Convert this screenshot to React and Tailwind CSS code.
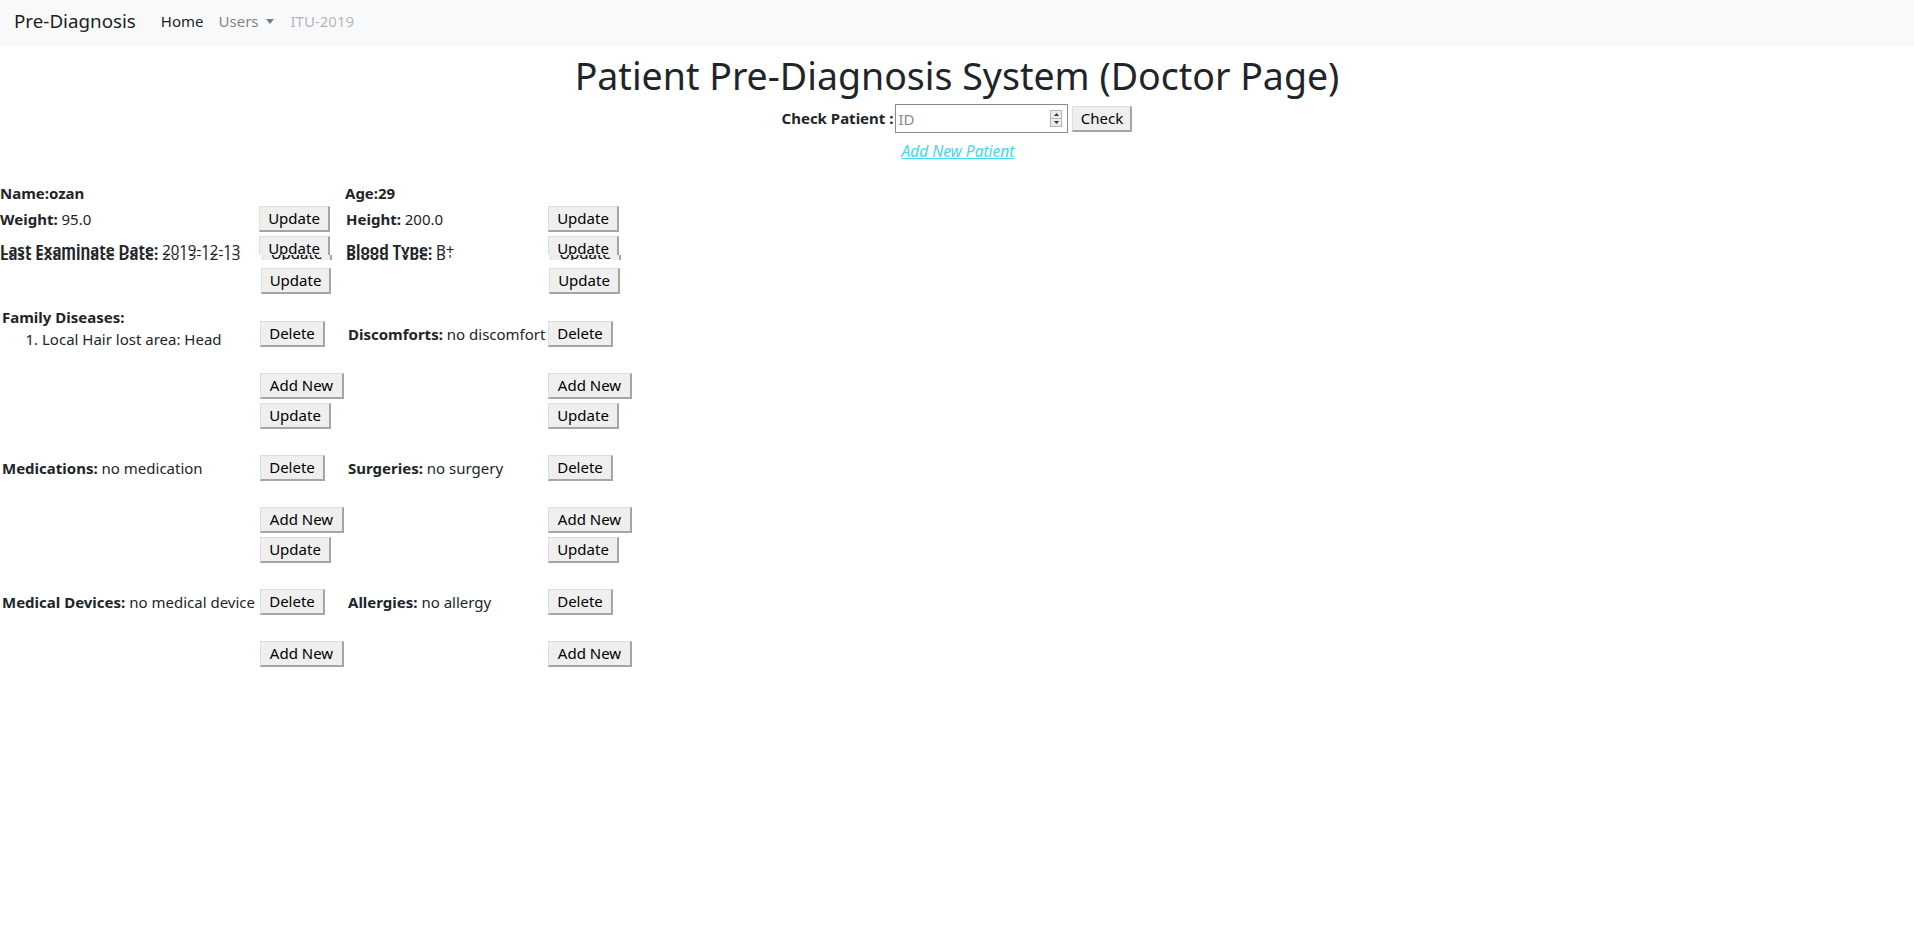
import React from "react";

const BTN =
  "bg-[#efefef] border-t border-l border-r-2 border-b-2 border-t-[#dedede] border-l-[#dedede] border-r-[#a5a5a5] border-b-[#a5a5a5] h-[26px] text-[15px] text-black flex items-center justify-center leading-none shrink-0 font-['Noto_Sans',sans-serif]";

function Btn({ w, children, inner = "" }) {
  return (
    <button className={`${BTN} ${w}`}>
      <span className={inner}>{children}</span>
    </button>
  );
}

function Lbl({ b, v }) {
  return (
    <span className="whitespace-nowrap text-[15px] text-[#212529]">
      <b className="font-bold">{b}</b>
      {v ? " " + v : ""}
    </span>
  );
}

const GRID = "grid grid-cols-[259px_88px_201px_120px] items-center";
const GRID2 = "grid grid-cols-[260px_88px_200px_120px] items-center";

function Block({ left, right, update = true, first = false }) {
  return (
    <div className={`${first ? "mt-[27px]" : "mt-[26px]"} flex flex-col`}>
      <div className={`${GRID2} h-[26px]`}>
        <div className="pl-[2px] flex items-center h-[26px] overflow-visible">{left}</div>
        <div>
          <Btn w="w-[65px]">Delete</Btn>
        </div>
        <div>{right}</div>
        <div>
          <Btn w="w-[65px]">Delete</Btn>
        </div>
      </div>
      <div className={`${GRID2} h-[26px] mt-[26px]`}>
        <div></div>
        <div>
          <Btn w="w-[84px]">Add New</Btn>
        </div>
        <div></div>
        <div>
          <Btn w="w-[84px]">Add New</Btn>
        </div>
      </div>
      {update && (
        <div className={`${GRID2} h-[26px] mt-[4px]`}>
          <div></div>
          <div>
            <Btn w="w-[71px]">Update</Btn>
          </div>
          <div></div>
          <div>
            <Btn w="w-[71px]">Update</Btn>
          </div>
        </div>
      )}
    </div>
  );
}

export default function App() {
  return (
    <div className="min-h-[935px] bg-white font-['Noto_Sans',sans-serif] text-[#212529]">
      {/* Navbar */}
      <nav className="h-[47px] bg-[#f8f9fa] flex items-center pl-[14px] pb-[4px]">
        <span className="text-[18.8px] text-[rgba(0,0,0,0.9)] mr-[25px]">Pre-Diagnosis</span>
        <span className="text-[15px] text-[rgba(0,0,0,0.9)] mr-[15px]">Home</span>
        <span className="text-[15px] text-[rgba(0,0,0,0.5)] flex items-center mr-[17px]">
          Users
          <svg width="8" height="5" viewBox="0 0 8 5" className="ml-[7px]">
            <path d="M0 0 L8 0 L4 5 Z" fill="rgba(0,0,0,0.5)" />
          </svg>
        </span>
        <span className="text-[15px] text-[rgba(0,0,0,0.3)]">ITU-2019</span>
      </nav>

      {/* Heading */}
      <h1 className="text-center text-[37.5px] leading-[48px] mt-[5px] font-normal text-[#212529]">
        Patient Pre-Diagnosis System (Doctor Page)
      </h1>

      {/* Check row */}
      <div className="flex justify-center items-center h-[29px] mt-[4px]">
        <span className="text-[15px] font-bold mr-[2px] whitespace-nowrap">Check Patient :</span>
        <div className="w-[173px] h-[29px] border border-[#8a8a8a] flex items-center bg-white">
          <input
            placeholder="ID"
            className="flex-1 min-w-0 h-full pl-[2px] text-[15px] outline-none placeholder:text-[#8a8a8a] bg-transparent"
          />
          <div className="w-[12px] h-[17px] mr-[5px] border border-[#b5b5b5] bg-[#ececec] flex flex-col">
            <div className="flex-1 flex items-center justify-center border-b border-[#b5b5b5]">
              <svg width="5" height="3" viewBox="0 0 5 3">
                <path d="M0 3 L2.5 0 L5 3 Z" fill="#333" />
              </svg>
            </div>
            <div className="flex-1 flex items-center justify-center">
              <svg width="5" height="3" viewBox="0 0 5 3">
                <path d="M0 0 L5 0 L2.5 3 Z" fill="#333" />
              </svg>
            </div>
          </div>
        </div>
        <div className="ml-[4px]">
          <Btn w="w-[60px]">Check</Btn>
        </div>
      </div>

      {/* Link */}
      <div className="flex justify-center mt-[7px] h-[24px] items-center">
        <a className="italic underline text-[15.5px] text-[#45d4f2] pl-[2px]">Add New Patient</a>
      </div>

      {/* Patient data */}
      <div className="flex flex-col">
        <div className={`${GRID} h-[24px] mt-[17px]`}>
          <Lbl b="Name:ozan" />
          <div></div>
          <div className="-ml-[2px]">
            <Lbl b="Age:29" />
          </div>
          <div></div>
        </div>
        <div className={`${GRID} h-[26px] mt-[1px]`}>
          <Lbl b="Weight:" v="95.0" />
          <div>
            <Btn w="w-[71px]">Update</Btn>
          </div>
          <div className="-ml-[1px]">
            <Lbl b="Height:" v="200.0" />
          </div>
          <div>
            <Btn w="w-[71px]">Update</Btn>
          </div>
        </div>
        {/* Last examinate row (rendering glitch reproduced) */}
        <div className="h-[19px] overflow-hidden mt-[4px]">
          <div className={`${GRID} h-[26px]`}>
            <Lbl b="Last Examinate Date:" v="2019-12-13" />
            <div>
              <Btn w="w-[71px]">Update</Btn>
            </div>
            <div className="-ml-[1px]">
              <Lbl b="Blood Type:" v="B+" />
            </div>
            <div>
              <Btn w="w-[71px]">Update</Btn>
            </div>
          </div>
        </div>
        <div className="h-[5px] overflow-hidden bg-white">
          <div className={`${GRID} h-[26px] -mt-[19px]`}>
            <div className="mt-[6px]">
              <Lbl b="Last Examinate Date:" v="2019-12-13" />
            </div>
            <div className="pl-[3px]">
              <Btn w="w-[70px]" inner="pt-[6px]">Update</Btn>
            </div>
            <div className="-ml-[1px] mt-[6px]">
              <Lbl b="Blood Type:" v="B+" />
            </div>
            <div className="pl-[2px]">
              <Btn w="w-[71px]" inner="pt-[6px]">Update</Btn>
            </div>
          </div>
        </div>
        <div className={`${GRID} h-[26px] mt-[8px]`}>
          <div></div>
          <div className="pl-[2px]">
            <Btn w="w-[70px]">Update</Btn>
          </div>
          <div></div>
          <div className="pl-[1px]">
            <Btn w="w-[71px]">Update</Btn>
          </div>
        </div>

        <Block
          first
          left={
            <div className="flex flex-col pb-[12px]">
              <b className="font-bold text-[15px] leading-[22px] whitespace-nowrap">Family Diseases:</b>
              <ol className="list-decimal pl-[40px] text-[15px] leading-[22px] whitespace-nowrap">
                <li>Local Hair lost area: Head</li>
              </ol>
            </div>
          }
          right={<Lbl b="Discomforts:" v="no discomfort" />}
        />
        <Block
          left={<Lbl b="Medications:" v="no medication" />}
          right={<Lbl b="Surgeries:" v="no surgery" />}
        />
        <Block
          left={<Lbl b="Medical Devices:" v="no medical device" />}
          right={<Lbl b="Allergies:" v="no allergy" />}
          update={false}
        />
      </div>
    </div>
  );
}
